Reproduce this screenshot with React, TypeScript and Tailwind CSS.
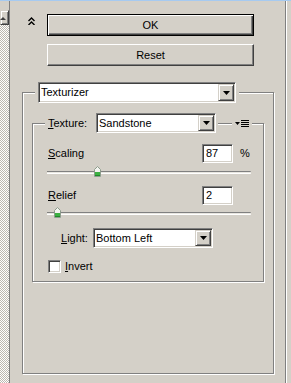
const sunken =
  "border border-t-[#808080] border-l-[#808080] border-r-white border-b-white shadow-[inset_1px_1px_0_#404040,inset_-1px_-1px_0_#d4d0c8]";
const raised =
  "border border-t-[#d4d0c8] border-l-[#d4d0c8] border-r-[#404040] border-b-[#404040] shadow-[inset_1px_1px_0_#fff,inset_-1px_-1px_0_#808080]";
const etched = "border border-[#808080] shadow-[inset_1px_1px_0_#fff,1px_1px_0_#fff]";

function ArrowBtn() {
  return (
    <div className={`w-[16px] flex items-center justify-center bg-[#d4d0c8] ${raised}`}>
      <svg width="7" height="4" viewBox="0 0 7 4">
        <path d="M0 0h7L3.5 4z" fill="#000" />
      </svg>
    </div>
  );
}

function Select({ value, className }: { value: string; className: string }) {
  return (
    <div className={`flex p-[1px] bg-white ${sunken} ${className}`}>
      <span className="flex-1 flex items-center pl-[1px] leading-none">{value}</span>
      <ArrowBtn />
    </div>
  );
}

function Thumb({ className }: { className: string }) {
  return (
    <svg width="7" height="11" viewBox="0 0 7 11" className={`absolute top-0 ${className}`}>
      <path d="M3.5 0.5L6.5 3.5V10.5H0.5V3.5Z" fill="#f4f4f0" stroke="#8c9c8c" />
      <rect x="1" y="6" width="5" height="4" fill="#3cb043" />
      <rect x="1" y="9" width="5" height="1" fill="#1f8a2a" />
    </svg>
  );
}

function Slider({ thumb }: { thumb: string }) {
  return (
    <div className="ml-[14px] w-[204px] h-[12px] pt-[5px] relative">
      <div className="h-[3px] border-t border-t-[#808080] border-b border-b-white bg-[#e8e6e0] rounded-r-[1px]" />
      <Thumb className={thumb} />
    </div>
  );
}

export default function App() {
  return (
    <div className="w-[291px] h-[383px] bg-[#d4d0c8] flex flex-col overflow-hidden font-['Liberation_Sans',Arial,sans-serif] text-[11px] text-black">
      <div className="h-[1px] shrink-0 bg-[#a6caf0]" />
      <div className="flex flex-1 min-h-0">
        {/* left scroll strip */}
        <div className="w-[9px] flex flex-col">
          <div className="h-[9px]" />
          <div className={`h-[15px] bg-[#d4d0c8] flex items-center ${raised}`}>
            <svg width="6" height="4" viewBox="0 0 6 4" className="-ml-[1px]">
              <path d="M0 4h6L3 1z" fill="#404040" />
            </svg>
          </div>
          <div className="flex-1 bg-[image:repeating-conic-gradient(#bcb8b0_0%_25%,#ffffff_0%_50%)] bg-[length:2px_2px]" />
        </div>
        <div className="w-[1px] bg-[#808080]" />

        <div className="w-[275px] flex flex-col">
          <div className="flex pt-[13px] pl-[18px]">
            <svg width="7" height="8" viewBox="0 0 7 8" className="mt-[3px]">
              <path d="M0.5 4L3.5 1L6.5 4M0.5 8L3.5 5L6.5 8" fill="none" stroke="#000" strokeWidth="1.4" />
            </svg>
            <div className="ml-[12px] w-[207px] flex flex-col gap-[8px]">
              <button className="h-[22px] flex items-center justify-center bg-[#d4d0c8] border border-black shadow-[inset_1px_1px_0_#fff,inset_-1px_-1px_0_#404040,inset_-2px_-2px_0_#808080] leading-none">
                OK
              </button>
              <button className="h-[22px] flex items-center justify-center bg-[#d4d0c8] border border-t-white border-l-white border-r-[#404040] border-b-[#404040] shadow-[inset_-1px_-1px_0_#808080] leading-none">
                Reset
              </button>
            </div>
          </div>

          <div className={`mt-[26px] ml-[12px] w-[252px] flex-1 mb-[9px] flex flex-col px-[9px] ${etched}`}>
            <div className="-mt-[11px] ml-[3px] self-start px-[3px] bg-[#d4d0c8]">
              <Select value="Texturizer" className="w-[198px] h-[21px]" />
            </div>

            <div className={`mt-[20px] flex flex-col pb-[8px] ${etched}`}>
              <div className="-mt-[11px] flex items-center h-[20px]">
                <div className="w-[12px]" />
                <div className="flex items-center px-[3px] pr-[2px] bg-[#d4d0c8] h-[20px]">
                  <span className="w-[48px] leading-none">
                    <span className="underline">T</span>exture:
                  </span>
                  <Select value="Sandstone" className="w-[120px] h-[20px]" />
                </div>
                <div className="flex-1" />
                <div className="px-[3px] bg-[#d4d0c8] h-[8px] flex items-center">
                  <svg width="14" height="7" viewBox="0 0 14 7">
                    <path d="M0 2h5L2.5 5z" fill="#000" />
                    <rect x="6" y="0" width="8" height="1" fill="#000" />
                    <rect x="6" y="2" width="8" height="1" fill="#000" />
                    <rect x="6" y="4" width="8" height="1" fill="#000" />
                    <rect x="6" y="6" width="8" height="1" fill="#000" />
                  </svg>
                </div>
                <div className="w-[11px]" />
              </div>

              <div className="mt-[11px] flex items-center pl-[15px] h-[19px]">
                <span className="flex-1 leading-none">
                  <span className="underline">S</span>caling
                </span>
                <div className={`w-[31px] h-[19px] p-[1px] bg-white flex items-center pl-[3px] leading-none ${sunken}`}>87</div>
                <span className="w-[30px] pl-[7px] leading-none">%</span>
              </div>
              <div className="mt-[3px]">
                <Slider thumb="left-[47px]" />
              </div>

              <div className="mt-[8px] flex items-center pl-[15px] h-[19px]">
                <span className="flex-1 leading-none">
                  <span className="underline">R</span>elief
                </span>
                <div className={`w-[31px] h-[19px] p-[1px] bg-white flex items-center pl-[3px] leading-none ${sunken}`}>2</div>
                <span className="w-[30px]" />
              </div>
              <div className="mt-[2px]">
                <Slider thumb="left-[7px]" />
              </div>

              <div className="mt-[9px] flex items-center pl-[28px] h-[20px]">
                <span className="w-[32px] leading-none">
                  <span className="underline">L</span>ight:
                </span>
                <Select value="Bottom Left" className="w-[120px] h-[20px]" />
              </div>

              <div className="mt-[12px] flex items-center pl-[15px] h-[13px]">
                <div className={`w-[13px] h-[13px] bg-white ${sunken}`} />
                <span className="ml-[4px] leading-none">
                  <span className="underline">I</span>nvert
                </span>
              </div>
            </div>
          </div>
        </div>

        <div className="w-[1px] bg-[#808080]" />
        <div className="w-[1px] bg-white" />
        <div className="flex-1" />
      </div>
    </div>
  );
}
